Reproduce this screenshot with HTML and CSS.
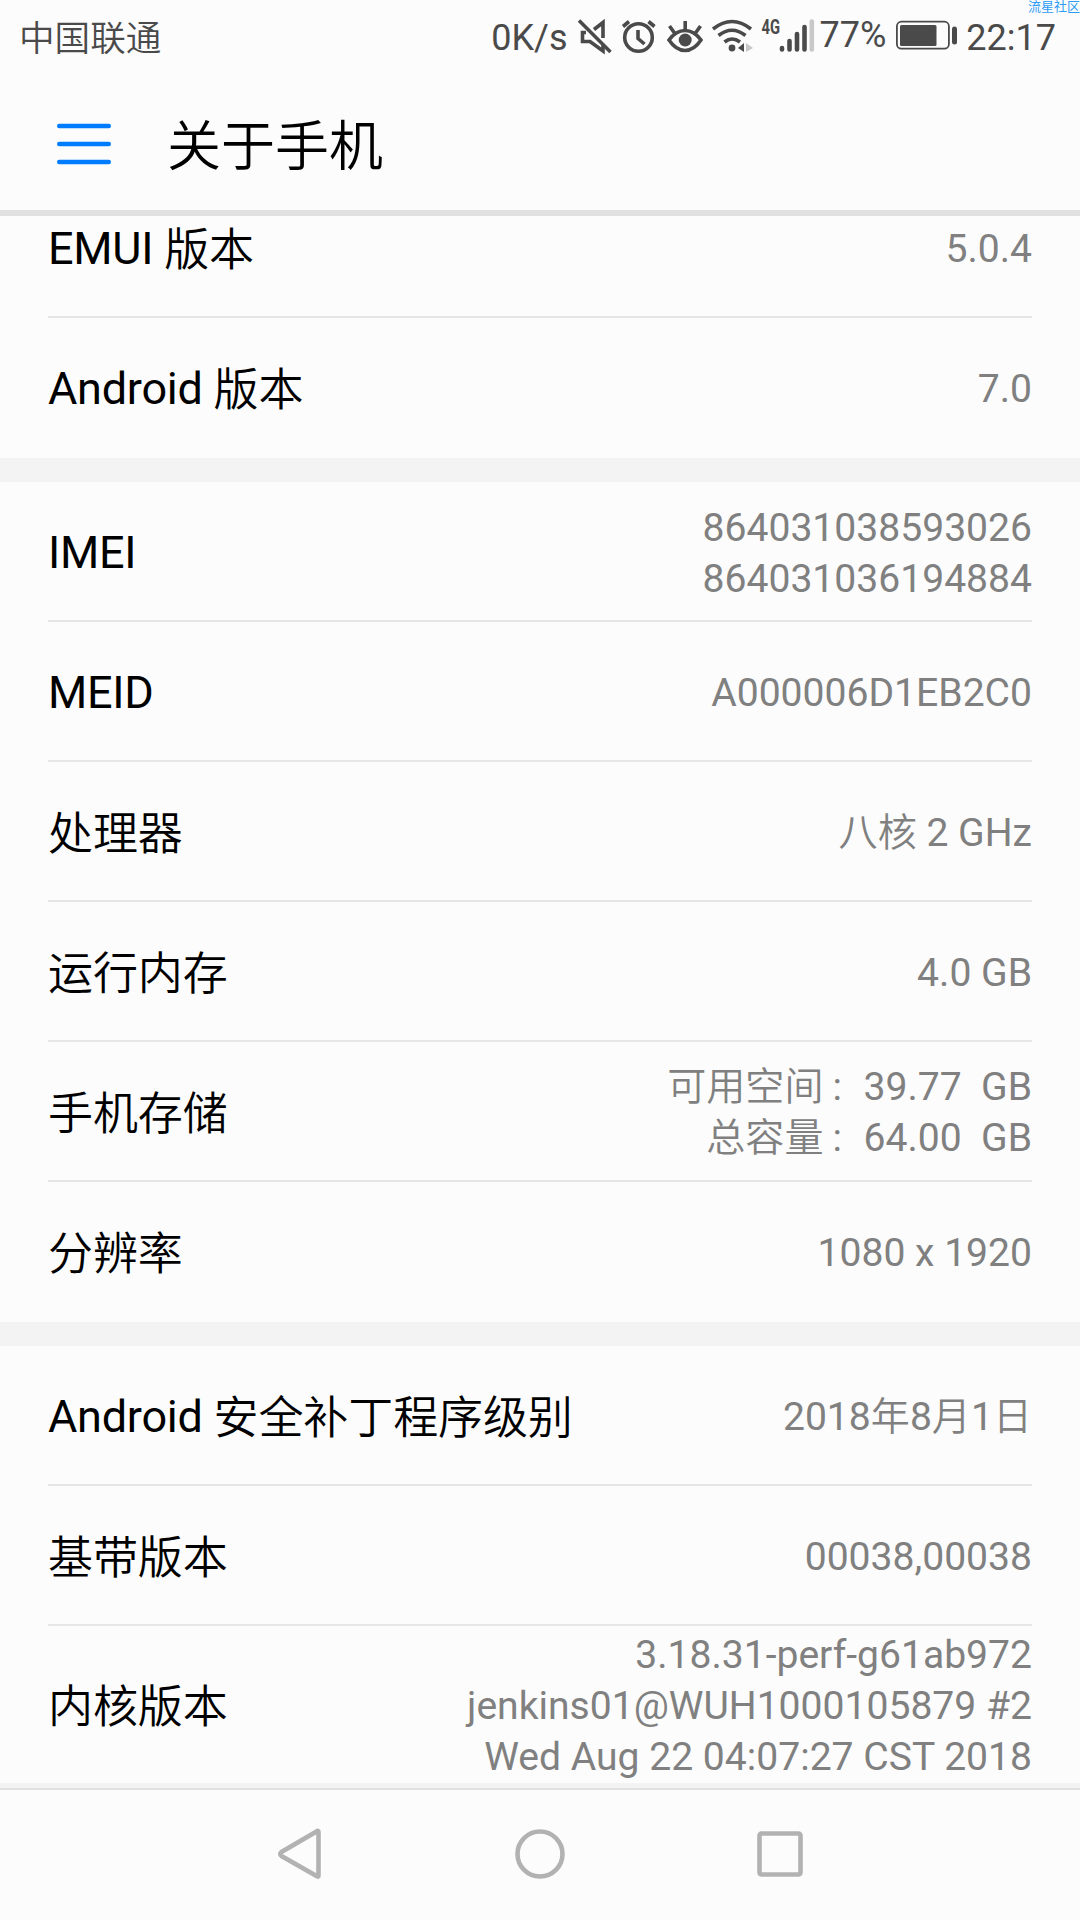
FILE: index.html
```
<!DOCTYPE html>
<html lang="zh-CN">
<head>
<meta charset="utf-8">
<title>关于手机</title>
<link rel="stylesheet" href="styles.css">
</head>
<body>
<div class="screen">
  <div class="watermark">流星社区</div>
  <div class="status">
    <span class="carrier">中国联通</span>
    <div class="indicators">
      <span class="speed">0K/s</span>
      <svg class="icons" width="246" height="44" viewBox="570 14 246 44" fill="none" stroke="#4a4a4a" stroke-width="3.6">
        <g class="mute">
          <path d="M579 20.500L610.500 52"/>
          <path d="M603 38V22.500L594 29.500M586 32.500H582.500V41.500H590L603 51V45"/>
        </g>
        <g class="alarm">
          <circle cx="638.500" cy="37.500" r="13.800"/>
          <path d="M638 30V38.500L644.500 44M623 26.500L629 21.500M654.500 26.500L648.500 21.500"/>
        </g>
        <g class="eye">
          <path d="M669 40Q676 30.500 685 30.500T701 40Q694 50.500 685 50.500T669 40Z"/>
          <path d="M685.200 29V21M674.500 33L669.500 26M695.500 33L700.500 26"/>
          <circle cx="685.200" cy="40" r="6.500" fill="#4a4a4a" stroke="none"/>
        </g>
        <g class="wifi">
          <path d="M713 29Q732 14 751 29M718.500 35.500Q732 25 745.500 35.500M724.500 42Q732 36 740 42"/>
          <circle cx="732" cy="48" r="3.400" fill="#4a4a4a" stroke="none"/>
          <path d="M744 43V52L738 48Z" fill="#4a4a4a" stroke="none"/>
          <path d="M746 43V52L753 48Z" fill="#c8c8c8" stroke="none"/>
        </g>
        <g class="signal" stroke-width="4.600" stroke-linecap="round">
          <path d="M782 48V49.500M789.500 41V49.500M797 34V49.500M804.500 27V49.500"/>
          <path d="M811.800 21.500V49.500" stroke="#c8c8c8"/>
        </g>
        <text class="network" x="761.500" y="34" textLength="18.500" lengthAdjust="spacingAndGlyphs">4G</text>
      </svg>
      <span class="percent">77%</span>
      <svg class="battery" width="62" height="30" viewBox="0 0 62 30">
        <rect x="0.900" y="1.700" width="52" height="27" rx="4.500" fill="none" stroke="#4a4a4a" stroke-width="1.800"/>
        <rect x="4" y="5" width="36.500" height="21" rx="1.500" fill="#4a4a4a"/>
        <rect x="56" y="6.500" width="5" height="18" rx="2.500" fill="#4a4a4a"/>
      </svg>
      <span class="time">22:17</span>
    </div>
  </div>
  <header class="bar">
    <svg class="menu" width="54" height="42" viewBox="0 0 54 42" stroke="#007dff" stroke-width="4.400" stroke-linecap="round">
      <path d="M2.200 3H51.800M2.200 21H51.800M2.200 39H51.800"/>
    </svg>
    <h1 class="title">关于手机</h1>
  </header>
  <main class="list">
    <section class="group first">
      <div class="row"><span class="label">EMUI <i>版本</i></span><span class="value">5.0.4</span></div>
      <div class="row"><span class="label">Android <i>版本</i></span><span class="value">7.0</span></div>
    </section>
    <section class="group">
      <div class="row"><span class="label">IMEI</span><span class="value">864031038593026<br>864031036194884</span></div>
      <div class="row"><span class="label">MEID</span><span class="value">A000006D1EB2C0</span></div>
      <div class="row"><span class="label"><i>处理器</i></span><span class="value"><i>八核</i> 2 GHz</span></div>
      <div class="row"><span class="label"><i>运行内存</i></span><span class="value">4.0 GB</span></div>
      <div class="row"><span class="label"><i>手机存储</i></span><span class="value storage"><i>可用空间</i><span class="colon">:</span>39.77&nbsp; GB<br><i>总容量</i><span class="colon">:</span>64.00&nbsp; GB</span></div>
      <div class="row"><span class="label"><i>分辨率</i></span><span class="value">1080 x 1920</span></div>
    </section>
    <section class="group">
      <div class="row"><span class="label">Android <i>安全补丁程序级别</i></span><span class="value">2018<i>年</i>8<i>月</i>1<i>日</i></span></div>
      <div class="row"><span class="label"><i>基带版本</i></span><span class="value">00038,00038</span></div>
      <div class="row tall"><span class="label"><i>内核版本</i></span><span class="value">3.18.31-perf-g61ab972<br>jenkins01@WUH1000105879 #2<br>Wed Aug 22 04:07:27 CST 2018</span></div>
    </section>
  </main>
  <nav class="nav">
    <svg width="50" height="54" viewBox="275 1827 50 54"><path d="M318.500 1832V1875.500Q318.500 1877.500 316.500 1876L281.500 1856Q279 1854 281.500 1852L316.500 1831.500Q318.500 1830 318.500 1832Z"/></svg>
    <svg width="54" height="54" viewBox="0 0 54 54"><circle cx="27" cy="27" r="22.500"/></svg>
    <svg width="50" height="54" viewBox="0 0 50 54"><rect x="4.500" y="6.500" width="41" height="41" rx="2"/></svg>
  </nav>
</div>
</body>
</html>
```
FILE: styles.css
```
* { box-sizing: border-box; }
body { margin: 0; background: #fcfcfc; }
svg { display: block; flex: none; }
i { font-style: normal; font-weight: 350; line-height: 1; }

.screen {
  position: relative;
  display: flex;
  flex-direction: column;
  width: 1080px;
  height: 1920px;
  overflow: hidden;
  background: #fcfcfc;
  font-family: Roboto, "Noto Sans CJK SC", sans-serif;
  color: #000;
}

.watermark {
  position: absolute;
  top: -1px;
  right: 0;
  font-size: 13px;
  line-height: 15px;
  color: #2e9bf5;
}

.status {
  display: flex;
  justify-content: space-between;
  height: 74px;
  padding: 0 24px 0 19px;
  font-size: 36px;
  line-height: 76px;
  color: #4a4a4a;
}
.carrier { font-size: 35.600px; font-weight: 350; line-height: 78px; }
.indicators { display: flex; }
.speed { margin-right: 2px; }
.icons { margin-top: 14px; }
.network { font: bold 21px Roboto, sans-serif; fill: #4a4a4a; stroke: none; }
.percent { margin-left: 4px; line-height: 70px; }
.battery { margin: 20px 8px 0 10px; }

.bar {
  display: flex;
  align-items: center;
  height: 142px;
  padding: 4px 57px 0;
  border-bottom: 6px solid #e1e1e1;
}
.title {
  margin: 8px 0 0 56px;
  font-size: 54px;
  font-weight: 350;
  line-height: 70px;
}

.list {
  display: flex;
  flex: 1;
  flex-direction: column;
  gap: 24px;
  min-height: 0;
  overflow: hidden;
  background: #f3f3f3;
}
.group { flex: none; padding: 0 48px; background: #fcfcfc; }
.first { margin-top: -38px; }
.row {
  display: flex;
  align-items: center;
  justify-content: space-between;
  height: 140px;
  padding-top: 5px;
  border-bottom: 2px solid #e6e6e6;
}
.row:last-child { border-bottom-color: transparent; }
.row.tall { height: 157px; }
.label { margin-top: -2px; font-size: 45px; line-height: 60px; letter-spacing: -0.250px; }
.label i { letter-spacing: -0.100px; vertical-align: -2px; }
.tall .label { margin-top: 0; }
.value { font-size: 39.100px; line-height: 51px; color: #808080; text-align: right; white-space: nowrap; }
.storage { margin-top: -2px; }
.colon { display: inline-block; width: 40px; padding-left: 9px; text-align: left; }

.nav {
  display: flex;
  flex: none;
  align-items: center;
  justify-content: center;
  gap: 188px;
  height: 132px;
  padding-bottom: 2px;
  border-top: 2px solid #e0e0e0;
  fill: none;
  stroke: #b2b2b2;
  stroke-width: 4.600px;
}
```
